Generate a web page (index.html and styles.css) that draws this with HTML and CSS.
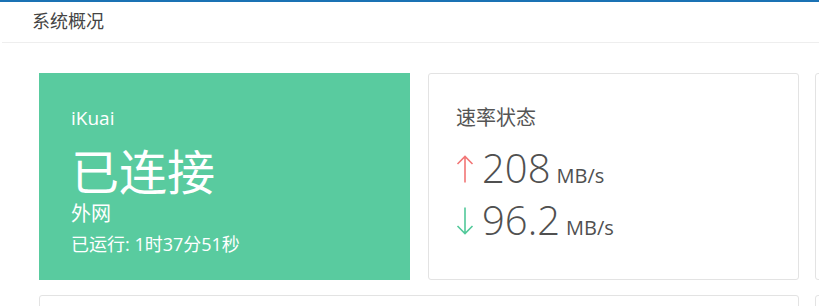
FILE: index.html
```html
<!DOCTYPE html>
<html lang="zh-CN">
<head>
  <meta charset="UTF-8">
  <meta name="viewport" content="width=device-width, initial-scale=1.0">
  <title>系统概况</title>
  <link rel="stylesheet" href="styles.css">
</head>
<body>
  <div class="page-header">
    <div class="page-title">系统概况</div>
  </div>
  <div class="overview">
    <div class="card card-status">
      <div class="status-name">iKuai</div>
      <div class="status-state">已连接</div>
      <div class="status-line">外网</div>
      <div class="status-uptime">已运行: 1时37分51秒</div>
    </div>
    <div class="card card-speed">
      <div class="card-title">速率状态</div>
      <div class="speed-row">
        <svg class="arrow arrow-up" width="18" height="28" viewBox="0 0 18 28">
          <path d="M9 1.5V27.5M1.5 9L9 1.5L16.5 9" fill="none" stroke="currentColor" stroke-width="1.6"/>
        </svg>
        <span class="speed-value">208</span>
        <span class="speed-unit">MB/s</span>
      </div>
      <div class="speed-row">
        <svg class="arrow arrow-down" width="18" height="28" viewBox="0 0 18 28">
          <path d="M9 0.5V26.5M1.5 19L9 26.5L16.5 19" fill="none" stroke="currentColor" stroke-width="1.6"/>
        </svg>
        <span class="speed-value">96.2</span>
        <span class="speed-unit">MB/s</span>
      </div>
    </div>
    <div class="card"></div>
    <div class="card card-wide"></div>
    <div class="card"></div>
  </div>
</body>
</html>
```

FILE: styles.css
```css
html, body {
  margin: 0;
  padding: 0;
  overflow: hidden;
}

body {
  font-family: "Open Sans", "Noto Sans CJK SC", sans-serif;
  background: #fff;
  color: #333;
  width: 819px;
  height: 306px;
}

.page-header {
  border-top: 2px solid #1a72b4;
}

.page-title {
  margin-left: 2px;
  padding: 0 0 0 30px;
  height: 40px;
  line-height: 39px;
  font-size: 18px;
  color: #444;
  border-bottom: 1px solid #eee;
}

.overview {
  display: grid;
  grid-template-columns: 372px 372px 372px;
  grid-auto-rows: 207px;
  column-gap: 16px;
  row-gap: 15px;
  padding: 30px 0 0 39px;
  width: 1200px;
}

.card {
  box-sizing: border-box;
  border: 1px solid #e3e3e3;
  border-radius: 3px;
  background: #fff;
}

.card-wide {
  grid-column: span 2;
}

.card-status {
  background: #59cb9f;
  border: none;
  border-radius: 0;
  color: #fff;
  padding: 32px 0 0 32px;
  margin-right: 1px;
}

.status-name {
  font-size: 19px;
  line-height: 26px;
}

.status-state {
  font-family: "Noto Sans CJK SC", sans-serif;
  font-size: 48px;
  line-height: 50px;
  margin-top: 13px;
}

.status-line {
  font-family: "Noto Sans CJK SC", sans-serif;
  font-size: 20px;
  line-height: 26px;
  margin-top: 6px;
}

.status-uptime {
  font-size: 18px;
  line-height: 26px;
  margin-top: 5px;
}

.card-speed {
  margin-left: 1px;
  padding: 29px 0 0 27px;
}

.card-title {
  font-family: "Noto Sans CJK SC", sans-serif;
  font-size: 20px;
  line-height: 28px;
  color: #555;
  margin-bottom: 11px;
}

.speed-row {
  display: flex;
  align-items: baseline;
  height: 52px;
  line-height: 52px;
  color: #505050;
}

.arrow {
  margin-right: 8px;
  align-self: center;
  margin-top: 2px;
}

.arrow-up {
  color: #f27676;
}

.arrow-down {
  color: #52c99a;
}

.speed-value {
  font-size: 40px;
  font-weight: 300;
  margin-right: 6px;
}

.speed-unit {
  font-size: 20px;
}
```
